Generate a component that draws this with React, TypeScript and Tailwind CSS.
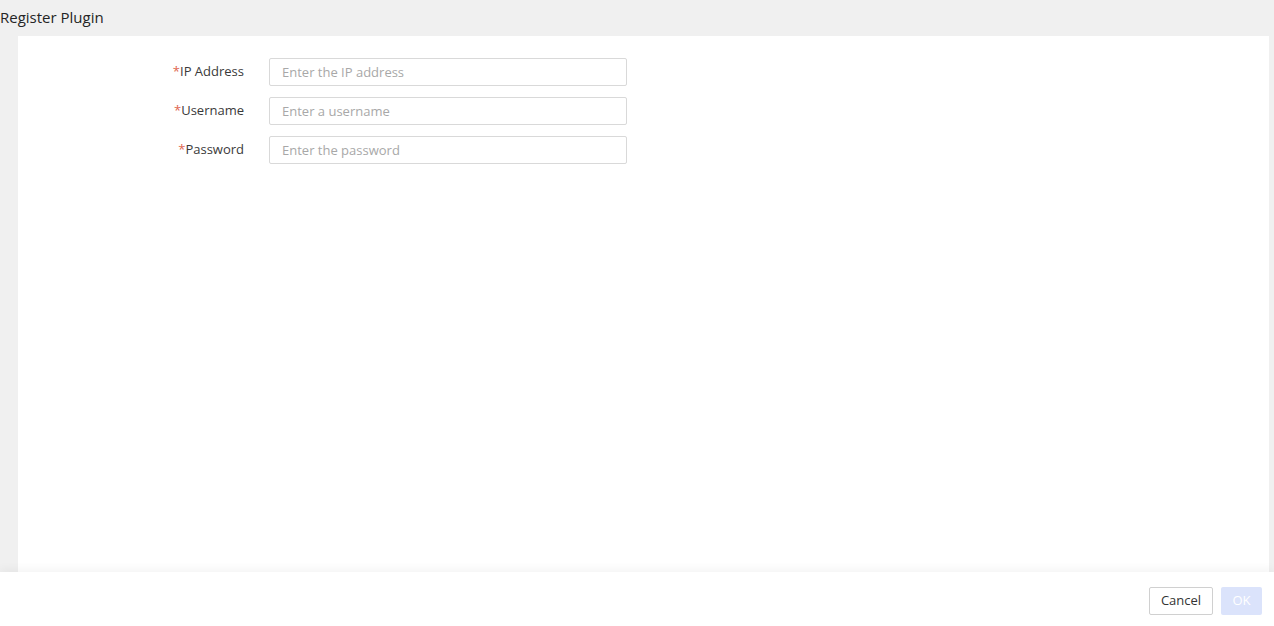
import React from "react";

const fields = [
  { label: "IP Address", placeholder: "Enter the IP address" },
  { label: "Username", placeholder: "Enter a username" },
  { label: "Password", placeholder: "Enter the password" },
];

export default function App() {
  return (
    <div
      className="w-[1274px] h-[626px] bg-[#f0f0f0] flex flex-col overflow-hidden text-[#333333]"
      style={{ fontFamily: '"Open Sans", "Noto Sans", sans-serif' }}
    >
      <div className="h-[36px] flex items-center text-[15px] leading-none pb-[1px] text-[#252525]">
        Register Plugin
      </div>
      <div className="flex-1 flex pl-[18px] pr-[5px]">
        <div className="flex-1 bg-white pt-[22px]">
          <div className="flex flex-col gap-[11px]">
            {fields.map((f) => (
              <div key={f.label} className="flex items-center">
                <div className="w-[226px] text-right text-[13px] text-[#3a3a3a]">
                  <span className="text-[#e0664f]">*</span>
                  {f.label}
                </div>
                <input
                  className="ml-[25px] w-[358px] h-[28px] border border-[#d9d9d9] rounded-[2px] px-[12px] text-[13px] outline-none placeholder:text-[#a8a8a8]"
                  placeholder={f.placeholder}
                  style={{ fontFamily: '"Open Sans", "Noto Sans", sans-serif' }}
                />
              </div>
            ))}
          </div>
        </div>
      </div>
      <div className="h-[54px] bg-white shadow-[0_-4px_8px_rgba(0,0,0,0.04)] relative flex items-center justify-end gap-[8px] pr-[12px] pt-[4px]">
        <button className="w-[64px] h-[28px] border border-[#d0d0d0] rounded-[2px] bg-white text-[13px] text-[#333333]">
          Cancel
        </button>
        <button className="w-[41px] h-[28px] rounded-[2px] bg-[#dbe3fb] text-[13px] text-white">
          OK
        </button>
      </div>
    </div>
  );
}
